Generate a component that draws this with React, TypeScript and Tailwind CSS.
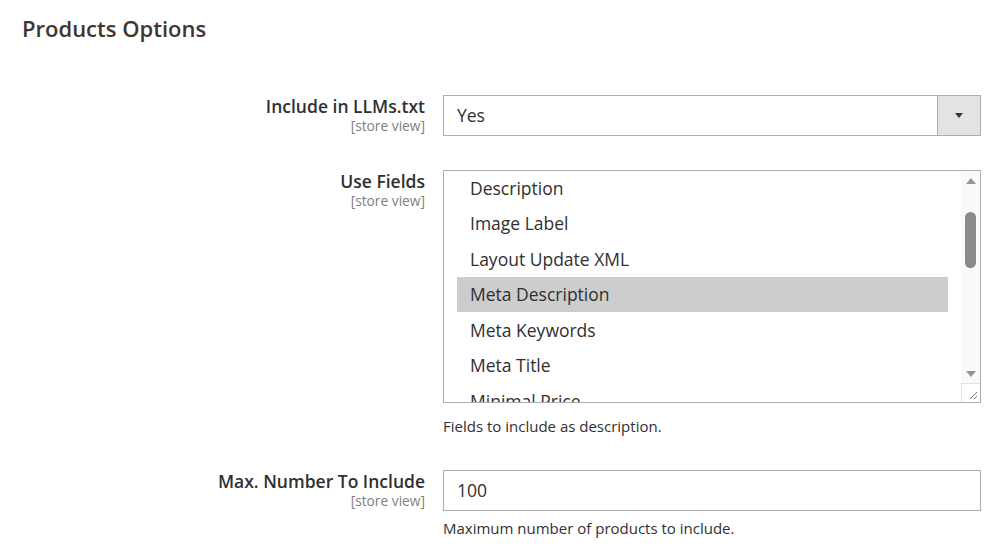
import React from "react";

const fields = [
  "Description",
  "Image Label",
  "Layout Update XML",
  "Meta Description",
  "Meta Keywords",
  "Meta Title",
  "Minimal Price",
];

function FieldLabel({ text }: { text: string }) {
  return (
    <div className="flex flex-col items-end text-right">
      <span className="text-[17.5px] leading-[22px] font-semibold text-[#303030]">{text}</span>
      <span className="text-[13.75px] leading-[17px] text-[#808080]">[store view]</span>
    </div>
  );
}

function Scrollbar() {
  return (
    <div className="absolute right-0 top-0 bottom-0 w-[19px] bg-[#f9f9f9] flex flex-col items-center">
      <div className="h-[212px] w-full flex flex-col items-center">
        {/* up arrow */}
        <div className="mt-[7px] w-0 h-0 border-l-[5.5px] border-r-[5.5px] border-b-[6px] border-l-transparent border-r-transparent border-b-[#959595]" />
        {/* thumb */}
        <div className="mt-[28px] w-[11px] h-[56px] rounded-full bg-[#8a8a8a]" />
        <div className="flex-1" />
        {/* down arrow */}
        <div className="mb-[6px] w-0 h-0 border-l-[5.5px] border-r-[5.5px] border-t-[6px] border-l-transparent border-r-transparent border-t-[#959595]" />
      </div>
      {/* resizer */}
      <div className="flex-1 w-full bg-white border-t border-l border-[#e3e3e3] flex items-end justify-end p-[2px]">
        <svg width="10" height="10" viewBox="0 0 10 10">
          <line x1="9" y1="2" x2="2" y2="9" stroke="#7a7a7a" strokeWidth="1" />
          <line x1="9" y1="6" x2="6" y2="9" stroke="#7a7a7a" strokeWidth="1" />
        </svg>
      </div>
    </div>
  );
}

export default function App() {
  return (
    <div className="w-[1000px] h-[554px] bg-white font-['Open_Sans',sans-serif] pl-[22px] pt-[13px] overflow-hidden">
      <h2 className="text-[22px] leading-[30px] font-semibold text-[#41362f]">Products Options</h2>

      <div className="mt-[52px] grid grid-cols-[403px_538px] gap-x-[18px]">
        {/* Include in LLMs.txt */}
        <FieldLabel text="Include in LLMs.txt" />
        <div className="h-[41px] border border-[#adadad] flex">
          <div className="flex-1 flex items-center pl-[13px] text-[17.5px] text-[#303030]">Yes</div>
          <div className="w-[43px] bg-[#e3e3e3] border-l border-[#adadad] flex items-center justify-center">
            <div className="w-0 h-0 border-l-[4px] border-r-[4px] border-t-[5px] border-l-transparent border-r-transparent border-t-[#41362f]" />
          </div>
        </div>

        {/* Use Fields */}
        <div className="mt-[34px]">
          <FieldLabel text="Use Fields" />
        </div>
        <div className="mt-[34px]">
          <div className="relative h-[233px] border border-[#adadad] overflow-hidden">
            <div className="-mt-[1px] pl-[13px] pr-[32px]">
              {fields.map((f) => (
                <div
                  key={f}
                  className={`h-[35.5px] flex items-center pl-[13px] text-[17.5px] text-[#303030] ${
                    f === "Meta Description" ? "bg-[#cdcdcd]" : ""
                  }`}
                >
                  {f}
                </div>
              ))}
            </div>
            <Scrollbar />
          </div>
          <p className="mt-[13px] text-[15px] leading-[20px] text-[#303030]">Fields to include as description.</p>
        </div>

        {/* Max. Number To Include */}
        <div className="mt-[34px]">
          <FieldLabel text="Max. Number To Include" />
        </div>
        <div className="mt-[34px]">
          <div className="h-[41px] border border-[#adadad] flex items-center pl-[13px] text-[17.5px] text-[#303030]">100</div>
          <p className="mt-[7px] text-[15px] leading-[20px] text-[#303030]">Maximum number of products to include.</p>
        </div>
      </div>
    </div>
  );
}
